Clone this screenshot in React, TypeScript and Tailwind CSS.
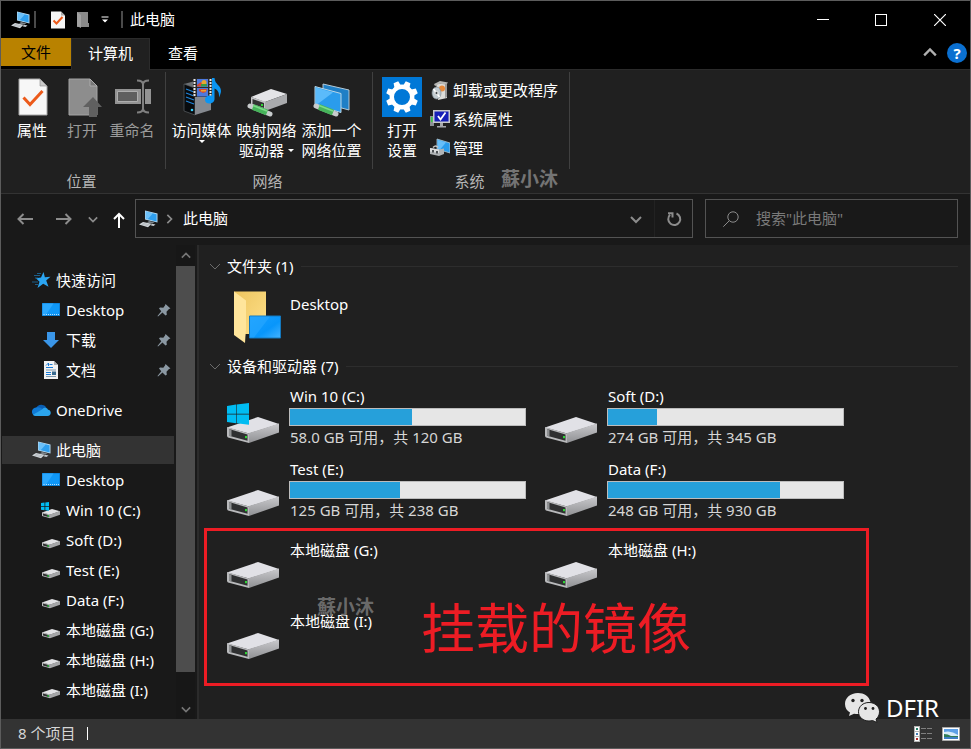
import { ReactNode } from 'react';
import clsx from 'clsx';

type IconProps = { className?: string };

type Drive = {
	name: string;
	detail: string;
	used: number;
	system?: boolean;
};

type TreeItem = {
	label: string;
	icon: ReactNode;
	pinned?: boolean;
};

function PcIcon({ className }: IconProps) {
	return (
		<svg viewBox="0 0 20 18" className={className} aria-hidden="true">
			<path d="M6 .5 18.500 3.500v9L6 9.600z" fill="#b9dcf2" />
			<path d="M6.800 1.500 17.600 4.200v7.200L6.800 8.800z" fill="#2f9fee" />
			<path d="M6.800 1.500 14 3.300 8.600 9.200l-1.800-.4z" fill="#6cc0f8" />
			<path d="m10 11 5.500 1.300-2.500 1.300-5-1.200z" fill="#7d858c" />
			<path d="m4 12 8.500 1.700-3.500 3.500-9-2.600z" fill="#d5dade" />
			<path d="m13 13.700 3.500.8-2 1.500-3-.8z" fill="#c3c9ce" />
			<path d="m3.500 13.200 7 1.600M2.400 14.200l7 1.600" stroke="#9aa1a7" strokeWidth=".5" />
		</svg>
	);
}

function DriveIcon({ className, system }: IconProps & { system?: boolean }) {
	return (
		<svg viewBox="0 0 52 40" className={className} aria-hidden="true">
			<defs>
				<linearGradient id="driveSide" x1="0" y1="0" x2="0" y2="1">
					<stop offset="0" stopColor="#c9c9cc" />
					<stop offset="1" stopColor="#8f9093" />
				</linearGradient>
			</defs>
			<path d="M0 24.500 31 14l21 7-30 9.500z" fill="#e1e1e6" />
			<path d="m22 30 30-9.500v9L22 40z" fill="url(#driveSide)" />
			<path d="m0 24 22 6.500V40L1 34.500q-1-.5-1-2z" fill="#b9babc" />
			<path d="m2 26 18.500 5.600v6.200L2 32.800z" fill="#2f3031" />
			<path d="m2 26 2.500.8v6.700L2 32.800z" fill="#8d8f91" />
			<rect x="18" y="33" width="2" height="2.200" fill="#2fd436" />
			{system && (
				<path
					d="M0 3 9 1.500v9.300H0zM9.600 1.400 22 0v10.800H9.600zM0 11.400h9v8.800L0 19zM9.600 11.400H22v10.400L9.600 20.300z"
					fill="#00bcf2"
				/>
			)}
		</svg>
	);
}

function SmallDriveIcon({ system }: { system?: boolean }) {
	return (
		<svg viewBox="0 0 20 18" className="h-[18px] w-5" aria-hidden="true">
			<path d="m1 11.500 10-3.500 8 2.300-10 3.500z" fill="#e2e2e5" />
			<path d="m9 13.500 10-3.400v3.700L9 17.200z" fill="#a5a6a8" />
			<path d="m1 11.300 8 2.300v3.600l-8-2.300z" fill="#bdbec0" />
			<path d="m2 12.500 6.300 1.800v1.900L2 14.500z" fill="#2f3031" />
			<rect x="6.500" y="14.200" width="1.500" height="1.500" fill="#24d03a" />
			{system && (
				<path
					d="M0 2 3.500 1.500V5H0zM4.300 1.500 8 1v4H4.300zM0 5.800h3.500v3.500L0 8.800zM4.300 5.800H8v4l-3.700-.5z"
					fill="#00bcf2"
				/>
			)}
		</svg>
	);
}

function DesktopIcon() {
	return (
		<svg viewBox="0 0 20 14" className="h-[14px] w-5" aria-hidden="true">
			<rect x="1" width="18" height="13" fill="#0b6cbd" />
			<rect x="1.500" y=".5" width="17" height="12" fill="#0f97f7" />
			<path d="M1.500.5h11l-8 12h-3z" fill="#2aa8ff" />
			<path d="M2.500 11.500h1M5 11.500h11M17 11.500h1" stroke="#fff" strokeDasharray="1 1" strokeOpacity=".7" />
		</svg>
	);
}

function DownloadIcon() {
	return (
		<svg viewBox="0 0 20 18" className="h-[18px] w-5" aria-hidden="true">
			<path d="M6 1h8v8h4l-8 8-8-8h4z" fill="#3a96e8" />
		</svg>
	);
}

function TextFileIcon() {
	return (
		<svg viewBox="0 0 20 18" className="h-[18px] w-5" aria-hidden="true">
			<path d="M3 0h10l4 4v14H3z" fill="#f2f2f2" />
			<path d="M13 0v4h4z" fill="#a9adb0" />
			<path d="M5 4.500 7.500 2v3M8.500 3.500h3M5 6.500h7" stroke="#1c7cd6" fill="none" />
			<path d="M5 9h10M5 15.500h10" stroke="#7f99ad" />
			<path d="M5 11.500h5M5 13.500h5" stroke="#1c7cd6" />
			<rect x="11" y="10.500" width="4" height="3.500" fill="#386a8f" />
		</svg>
	);
}

function QuickAccessIcon() {
	return (
		<svg viewBox="0 0 20 18" className="h-[18px] w-5" aria-hidden="true">
			<path
				d="m12.500 1 1.400 5.200 5.600-.4-4.300 3.700 2.300 6.300-5.300-3L6.500 17l2-6.200-3.500-3.600 5-.7z"
				fill="#2ba5f2"
			/>
			<path d="M6 2.500h4M3 4.500h6M4 7h3M1 11h6M4 13.500h3" stroke="#1c6ea5" strokeWidth=".8" />
		</svg>
	);
}

function CloudIcon() {
	return (
		<svg viewBox="0 0 20 14" className="h-[14px] w-5" aria-hidden="true">
			<path d="M5 5a6 6 0 0 1 10.500-.5l-6 4z" fill="#0a5fb4" />
			<path d="M4.500 13A4.300 4.300 0 1 1 6 4.500c2-.5 4 .5 6 2l-4 6.500z" fill="#0f7ad6" />
			<path d="M11 6.500c1-2.500 5.500-2.500 6 .2 3.500.3 4 6.300-.5 6.300h-12c-1 0-2-.5-2.500-1.200z" fill="#2ba4ec" />
		</svg>
	);
}

function PinIcon() {
	return (
		<svg viewBox="0 0 14 14" className="h-[14px] w-[14px]" aria-hidden="true">
			<path d="m8.500 1 5 4.500-1.500.5-2.500 2.700.3 3-1.300.8-3-3L1 13.500l-.5-.5L4.300 8.300 2 5.500l1-1 3.300.2L8 2.500z" fill="#8b98a3" />
		</svg>
	);
}

function Chevron({ dir, className }: { dir: 'up' | 'down' | 'right' } & IconProps) {
	const paths = {
		up: 'm1 8 5-5 5 5',
		down: 'm1 4 5 5 5-5',
		right: 'm4 1 5 5-5 5',
	};
	return (
		<svg viewBox="0 0 12 12" className={clsx('fill-none stroke-current', className)} aria-hidden="true">
			<path d={paths[dir]} />
		</svg>
	);
}

function PropertiesIcon() {
	return (
		<svg viewBox="0 0 40 40" className="h-10 w-10" aria-hidden="true">
			<path d="M7 2h21l7 7v29H7z" fill="#f7f7f7" stroke="#a6a6a6" />
			<path d="M28 2v7h7z" fill="#c9c9c9" stroke="#8c8c8c" strokeWidth=".6" />
			<path d="m11.500 20.500 6.500 7L30.500 14" fill="none" stroke="#ec5a1a" strokeWidth="3" />
		</svg>
	);
}

function OpenIcon() {
	return (
		<svg viewBox="0 0 40 40" className="h-10 w-10" aria-hidden="true">
			<path d="M7 2h21l7 7v29H7z" fill="#8d8d8d" stroke="#a3a3a3" />
			<path d="M28 2v7h7z" fill="#777" stroke="#b4b4b4" strokeWidth=".8" />
			<path d="m31 20 9 10h-5v10h-8V30h-6z" fill="#606060" />
		</svg>
	);
}

function RenameIcon() {
	return (
		<svg viewBox="0 0 40 40" className="h-10 w-10" aria-hidden="true">
			<path d="M3 12h36v15H3z" fill="#939393" />
			<path d="M5.500 14.500h20v10h-20z" fill="#5f5f5f" stroke="#aeaeae" />
			<path d="M29 11h4v17h-4z" fill="#202020" />
			<path d="M25 3.500q6 0 6 4v24q0 4-6 4M37 3.500q-6 0-6 4v24q0 4 6 4" fill="none" stroke="#808080" strokeWidth="2" />
		</svg>
	);
}

function MediaIcon() {
	return (
		<svg viewBox="0 0 40 40" className="h-10 w-10" aria-hidden="true">
			<path d="m2 7 11-3 16 3-16 5z" fill="#6b6f73" />
			<path d="m2 7 11 4v27L2 34z" fill="#080b0e" stroke="#5a5f63" strokeWidth=".7" />
			<path d="m13 11 16-4v26l-16 5z" fill="#85898f" />
			<path d="m4 12 8 3M4 16l8 3M4 20l8 3M4 24l8 3" stroke="#1f86dd" strokeWidth="1.200" />
			<circle cx="10" cy="33" r="1.300" fill="#38d0ff" />
			<path d="M11 1.500h19V20H11z" fill="#2b2b2b" />
			<path d="M12.500 2v18M28.500 2v18" stroke="#e9e9e9" strokeWidth="2" strokeDasharray="2 1" />
			<path d="M15 2h11v8H15zM15 11h11v8.500H15z" fill="#4d79dd" />
			<path d="m15 8 4-3 3 3-3 1.500h-4zM17 12h8l-1 3-3 1-4-2z" fill="#d8472d" />
			<circle cx="22" cy="5.500" r="2.500" fill="#e8a531" />
			<path d="M19 7h6v2.500h-6z" fill="#3a9a43" />
			<path d="M19 13h5v1.500h-5z" fill="#e8a531" />
			<path
				d="M30 1h2.500c.5 7 6.500 7 6.500 13 0 2-1 4-2 6.500.5-6-2-8-4.500-9V22c0 3-2.800 4.500-5 4.500-3 0-4.500-1.500-4.500-3.700 0-3.300 4-5.300 7-3.800z"
				fill="#0b95f2"
			/>
		</svg>
	);
}

function Cable() {
	return (
		<g>
			<path d="m4 29 20 8" stroke="#c8cccd" strokeWidth="5" strokeLinecap="round" />
			<path d="m7 30 14 5.500" stroke="#46b35a" strokeWidth="6" />
			<path d="m7 28.500 14 5.500" stroke="#7cdb88" strokeWidth="1.500" />
		</g>
	);
}

function MapDriveIcon() {
	return (
		<svg viewBox="0 0 40 40" className="h-10 w-10" aria-hidden="true">
			<path d="m4 20 20-8 16 5-22 8z" fill="#e4e4e7" />
			<path d="m18 25 22-8v9l-22 8z" fill="#a9aaad" />
			<path d="m4 20 14 4.500V34L4 28z" fill="#c4c5c7" />
			<path d="m5.500 22 11.500 4v5L5.500 27z" fill="#333" />
			<rect x="14" y="27" width="2" height="2" fill="#2fd436" />
			<g transform="translate(-1 0)">
				<Cable />
			</g>
		</svg>
	);
}

function NetworkPlaceIcon() {
	return (
		<svg viewBox="0 0 40 40" className="h-10 w-10" aria-hidden="true">
			<path d="m11 7 26 6v20l-26-7z" fill="#1f7fc6" stroke="#b4c9d6" />
			<path d="m3 9.500 26 7v19L3 28z" fill="#2a9cec" stroke="#b9d6e6" />
			<path d="m4 10.500 17 5L5 27.500l-1-.3z" fill="#5bbbfa" />
			<Cable />
		</svg>
	);
}

function SettingsTile() {
	return (
		<svg viewBox="0 0 40 40" className="h-10 w-10" aria-hidden="true">
			<rect width="40" height="40" fill="#0078d7" />
			<circle cx="20" cy="20" r="10.200" fill="none" stroke="#fff" strokeWidth="4.400" />
			{[22.5, 67.5, 112.5, 157.5, 202.5, 247.5, 292.5, 337.5].map((angle) => (
				<path key={angle} d="m16.500 9.500 1-5.500h5l1 5.500z" fill="#fff" transform={`rotate(${angle} 20 20)`} />
			))}
		</svg>
	);
}

function UninstallIcon() {
	return (
		<svg viewBox="0 0 20 20" className="h-5 w-5" aria-hidden="true">
			<path d="m6 3 11 1v14l-9 2z" fill="#dcdcd9" />
			<path d="m4 4 6-3 8 1.500-2 2.500-6-1.500L5 6z" fill="#b7b7b4" />
			<path d="m15 4 2-.5V17l-2 1z" fill="#999" />
			<circle cx="12" cy="8.500" r="3" fill="#e68a3c" />
			<ellipse cx="6.500" cy="13" rx="4.500" ry="6" fill="#c2ccd2" stroke="#7f8a90" strokeWidth=".7" />
			<path d="m6.500 13-3-4M6.500 13l3 4" stroke="#fff" strokeWidth="1.500" />
			<circle cx="6.500" cy="13" r="1.600" fill="#43494d" stroke="#eee" />
		</svg>
	);
}

function SystemIcon() {
	return (
		<svg viewBox="0 0 20 20" className="h-5 w-5" aria-hidden="true">
			<path d="M0 7h4v10H0z" fill="#8c9095" />
			<path d="M1 8h1.500v5H1z" fill="#36d143" />
			<path d="M3 1h17v13H3z" fill="#c7c9cc" />
			<path d="M4.500 2.500h14v10h-14z" fill="#1620b8" />
			<path d="m8 7 2.500 3.500L15.500 3.500" fill="none" stroke="#fff" strokeWidth="1.800" />
			<path d="M10 14h3v3h3v1.500H7V17h3z" fill="#a6a8ab" />
		</svg>
	);
}

function ManageIcon() {
	return (
		<svg viewBox="0 0 20 20" className="h-5 w-5" aria-hidden="true">
			<path d="m7 1 13 4v10L7 11z" fill="#2a9cec" stroke="#b3cad8" strokeWidth=".8" />
			<path d="m8 2 8 2.500-6 7-2-.6z" fill="#67bffa" />
			<path d="M3 9.500q3-3 5 0" fill="none" stroke="#c5c5c5" strokeWidth="1.500" />
			<path d="m0 10 9 1.500 5-1V16l-5 2-9-2z" fill="#b0b3b5" />
			<path d="m0 10 9 1.500V15l-9-1.500z" fill="#dadcdd" />
			<path d="M2 12h2v2.500H2zM6 13h2v2.500H6z" fill="#4d5154" />
		</svg>
	);
}

function FolderIcon() {
	return (
		<svg viewBox="0 0 54 54" className="h-[54px] w-[54px]" aria-hidden="true">
			<defs>
				<linearGradient id="folderBack" x1="0" y1="0" x2="1" y2="1">
					<stop offset="0" stopColor="#edc55f" />
					<stop offset="1" stopColor="#ffe08a" />
				</linearGradient>
				<linearGradient id="screen" x1="0" y1="0" x2="1" y2="1">
					<stop offset="0" stopColor="#1aa0ff" />
					<stop offset=".6" stopColor="#0896fb" />
					<stop offset="1" stopColor="#43b2ff" />
				</linearGradient>
			</defs>
			<path d="M7 1.500h32V44H7z" fill="url(#folderBack)" />
			<path d="m7 1.500 12 9V38l-1 15L7 45z" fill="#ffe59b" />
			<path d="M22.500 26h31v22h-31z" fill="url(#screen)" stroke="#1478bd" />
			<path d="M23 26.500h20L27 47.500h-4z" fill="#2aa9ff" fillOpacity=".6" />
		</svg>
	);
}

function WeChatIcon() {
	return (
		<svg viewBox="0 0 36 30" className="h-[30px] w-9" aria-hidden="true">
			<path d="M13 0C5 0 0 5 0 11c0 4 2 7 5 8.500L4 23l5-2.300c2 .5 5 .5 6 .3C14 14 19 9 25.500 9 24 3 19 0 13 0z" fill="#e6e6e6" />
			<path d="M24 9.500c-6 0-10.500 4-10.500 9.300S18 28 24 28c1.500 0 2.500-.2 3.500-.5L32 29.500l-1-3.500c2-1.500 3.500-4 3.500-7.200 0-5.300-4.500-9.300-10.500-9.300z" fill="#e6e6e6" stroke="#202020" />
			<g fill="#202020">
				<circle cx="8" cy="7.500" r="1.700" />
				<circle cx="17" cy="7.500" r="1.700" />
				<circle cx="20.500" cy="15.500" r="1.400" />
				<circle cx="28" cy="15.500" r="1.400" />
			</g>
		</svg>
	);
}

const drives: Drive[] = [
	{ name: 'Win 10 (C:)', detail: '58.0 GB 可用，共 120 GB', used: 52, system: true },
	{ name: 'Soft (D:)', detail: '274 GB 可用，共 345 GB', used: 21 },
	{ name: 'Test (E:)', detail: '125 GB 可用，共 238 GB', used: 47 },
	{ name: 'Data (F:)', detail: '248 GB 可用，共 930 GB', used: 73 },
];

const localDisks = ['本地磁盘 (G:)', '本地磁盘 (H:)', '本地磁盘 (I:)'];

const quickAccess: TreeItem[] = [
	{ label: 'Desktop', icon: <DesktopIcon />, pinned: true },
	{ label: '下载', icon: <DownloadIcon />, pinned: true },
	{ label: '文档', icon: <TextFileIcon />, pinned: true },
];

const thisPc: TreeItem[] = [
	{ label: 'Desktop', icon: <DesktopIcon /> },
	{ label: 'Win 10 (C:)', icon: <SmallDriveIcon system /> },
	{ label: 'Soft (D:)', icon: <SmallDriveIcon /> },
	{ label: 'Test (E:)', icon: <SmallDriveIcon /> },
	{ label: 'Data (F:)', icon: <SmallDriveIcon /> },
	...localDisks.map((label) => ({ label, icon: <SmallDriveIcon /> })),
];

function TitleBar() {
	return (
		<header className="flex h-[37px] items-center bg-black pl-[10px]">
			<PcIcon className="h-[18px] w-5" />
			<span className="ml-[3px] h-[17px] w-[2px] border border-[#4a4a4a]" />
			<button aria-label="属性" className="ml-[14px]">
				<svg viewBox="0 0 16 18" className="h-[18px] w-4" aria-hidden="true">
					<path d="M1 .5h10l4 4v13H1z" fill="#f5f5f5" />
					<path d="M11 .5v4h4z" fill="#aaa" />
					<path d="m3.500 9.500 3 3 6-6.500" fill="none" stroke="#ec5a1a" strokeWidth="2" />
				</svg>
			</button>
			<button aria-label="新建文件夹" className="ml-[10px]">
				<svg viewBox="0 0 14 18" className="h-[18px] w-[14px]" aria-hidden="true">
					<path d="M1 1h11v11h1v4H1z" fill="#8a8a8a" />
					<path d="m1 1 4 3v13l-4-2z" fill="#a2a2a2" />
				</svg>
			</button>
			<button aria-label="自定义快速访问工具栏" className="ml-[11px]">
				<svg viewBox="0 0 8 8" className="h-2 w-2" aria-hidden="true">
					<path d="M.5.500h7v1h-7zM1 3.500h6l-3 3z" fill="#fff" />
				</svg>
			</button>
			<span className="ml-[12px] h-[17px] w-[2px] border border-[#4a4a4a]" />
			<h1 className="ml-[7px] grow text-[15px]">此电脑</h1>
			<button aria-label="最小化" className="flex h-full w-[58px] items-center justify-center">
				<span className="h-px w-3 bg-white" />
			</button>
			<button aria-label="最大化" className="flex h-full w-[58px] items-center justify-center">
				<span className="h-3 w-3 border border-white" />
			</button>
			<button aria-label="关闭" className="flex h-full w-[60px] items-center justify-center">
				<svg viewBox="0 0 12 12" className="h-3 w-3 stroke-white" aria-hidden="true">
					<path d="m0 0 12 12M12 0 0 12" strokeWidth="1.200" />
				</svg>
			</button>
		</header>
	);
}

function TabBar() {
	return (
		<nav className="flex h-8 items-start border-b border-[#2b2b2b] bg-black">
			<button className="h-7 w-[70px] bg-[#b98200] text-black">文件</button>
			<button className="h-8 w-[79px] border-x border-t border-[#2b2b2b] bg-[#202020] pb-[2px]">计算机</button>
			<button className="h-8 w-[66px] pb-[2px]">查看</button>
			<div className="ml-auto flex h-8 items-center gap-[10px] pr-[3px] pb-[2px]">
				<button aria-label="折叠功能区">
					<Chevron dir="up" className="h-[14px] w-[14px] stroke-2 text-[#b0b0b0]" />
				</button>
				<button aria-label="帮助" className="h-5 w-5 rounded-full bg-[#0a6fd0] leading-5 font-bold">
					?
				</button>
			</div>
		</nav>
	);
}

type RibbonButtonProps = {
	icon: ReactNode;
	lines: string[];
	className: string;
	disabled?: boolean;
	arrow?: boolean;
};

function Caret() {
	return <span className="inline-block border-x-[3px] border-t-[3px] border-x-transparent border-t-white" />;
}

function RibbonButton({ icon, lines, className, disabled, arrow }: RibbonButtonProps) {
	return (
		<button disabled={disabled} className={clsx('flex flex-col items-center disabled:text-[#9b9b9b]', className)}>
			{icon}
			<span className="mt-[3px] flex flex-col items-center leading-5 whitespace-nowrap">
				{lines.map((line, i) => (
					<span key={line} className="flex items-center gap-1">
						{line}
						{arrow && i === 1 && <Caret />}
					</span>
				))}
			</span>
			{arrow && lines.length === 1 && (
				<span className="flex h-1">
					<Caret />
				</span>
			)}
		</button>
	);
}

function RibbonGroup({ title, className, children }: { title: string; className: string; children: ReactNode }) {
	return (
		<section className={clsx('relative flex shrink-0 flex-col', className)}>
			<div className="flex h-[98px] border-r border-[#404040] pt-[5px]">{children}</div>
			<h2 className="pr-1 text-center leading-6 text-[#b5b5b5]">{title}</h2>
		</section>
	);
}

function Ribbon() {
	return (
		<div className="flex h-[124px] border-b border-[#333] bg-[#202020] pt-[2px]">
			<RibbonGroup title="位置" className="w-[165px]">
				<RibbonButton icon={<PropertiesIcon />} lines={['属性']} className="ml-[6px] w-[50px]" />
				<RibbonButton icon={<OpenIcon />} lines={['打开']} className="w-[50px]" disabled />
				<RibbonButton icon={<RenameIcon />} lines={['重命名']} className="w-[50px]" disabled />
			</RibbonGroup>
			<RibbonGroup title="网络" className="w-[207px]">
				<RibbonButton icon={<MediaIcon />} lines={['访问媒体']} className="ml-[3px] w-[65px]" arrow />
				<RibbonButton icon={<MapDriveIcon />} lines={['映射网络', '驱动器']} className="w-[65px]" arrow />
				<RibbonButton icon={<NetworkPlaceIcon />} lines={['添加一个', '网络位置']} className="w-[65px]" />
			</RibbonGroup>
			<RibbonGroup title="系统" className="w-[197px]">
				<RibbonButton icon={<SettingsTile />} lines={['打开', '设置']} className="ml-1 w-[50px]" />
				<div className="ml-[3px] flex flex-col gap-[9px] pt-[3px] leading-5">
					<button className="flex gap-[3px] whitespace-nowrap">
						<UninstallIcon />
						卸载或更改程序
					</button>
					<button className="flex gap-[3px]">
						<SystemIcon />
						系统属性
					</button>
					<button className="flex gap-[3px]">
						<ManageIcon />
						管理
					</button>
				</div>
				<span className="absolute right-3 bottom-[2px] text-[19px] leading-6 font-bold text-[#747474]">蘇小沐</span>
			</RibbonGroup>
		</div>
	);
}

function AddressBar() {
	return (
		<div className="flex h-[51px] items-start bg-[#191919] pt-[5px] pr-3">
			<div className="flex h-10 w-[134px] shrink-0 items-center text-[#8c8c8c]">
				<button aria-label="后退" className="ml-4">
					<svg viewBox="0 0 16 12" className="h-3 w-4 fill-none stroke-current stroke-2" aria-hidden="true">
						<path d="M16 6H1.500M6.500 1l-5 5 5 5" />
					</svg>
				</button>
				<button aria-label="前进" className="ml-[23px]">
					<svg viewBox="0 0 16 12" className="h-3 w-4 fill-none stroke-current stroke-2" aria-hidden="true">
						<path d="M0 6h14.500M9.500 1l5 5-5 5" />
					</svg>
				</button>
				<button aria-label="最近浏览的位置" className="ml-[16px]">
					<Chevron dir="down" className="h-[10px] w-[10px] stroke-2" />
				</button>
				<button aria-label="上移" className="ml-[14px] pt-[2px]">
					<svg viewBox="0 0 14 16" className="h-4 w-[14px] fill-none stroke-white stroke-2" aria-hidden="true">
						<path d="M7 16V2M2 7l5-5 5 5" />
					</svg>
				</button>
			</div>
			<div className="flex h-[39px] grow items-center border border-[#535353] pl-[3px]">
				<PcIcon className="h-[18px] w-5" />
				<Chevron dir="right" className="ml-[5px] h-[10px] w-[10px] stroke-2 text-[#8c8c8c]" />
				<a href="#this-pc" className="ml-[9px] grow">
					此电脑
				</a>
				<button aria-label="以前的位置">
					<Chevron dir="down" className="h-3 w-3 stroke-2 text-[#8c8c8c]" />
				</button>
				<button aria-label="刷新" className="ml-3 flex h-full w-[38px] items-center justify-center border-l border-[#222]">
					<svg viewBox="0 0 16 16" className="h-4 w-4 fill-none stroke-[#8c8c8c] stroke-2" aria-hidden="true">
						<path d="M10.500 2.500a6 6 0 1 1-6.500 1.300M2 2.200h4.500v4.300" />
					</svg>
				</button>
			</div>
			<label className="ml-3 flex h-[39px] w-[253px] items-center border border-[#535353] pl-[17px]">
				<svg viewBox="0 0 16 16" className="h-4 w-4 shrink-0 fill-none stroke-[#8c8c8c]" aria-hidden="true">
					<circle cx="10" cy="6" r="5.200" />
					<path d="m6.300 9.700-6 6" />
				</svg>
				<input
					type="text"
					aria-label="搜索"
					placeholder={'搜索"此电脑"'}
					className="ml-[17px] w-full min-w-0 bg-transparent outline-none placeholder:text-[#7a7a7a]"
				/>
			</label>
		</div>
	);
}

function TreeChildren({ items }: { items: TreeItem[] }) {
	return (
		<ul>
			{items.map((item) => (
				<li key={item.label} className="flex h-[30px] items-center pr-[3px] pl-10">
					{item.icon}
					<a href="#item" className="ml-[5px] grow whitespace-nowrap">
						{item.label}
					</a>
					{item.pinned && <PinIcon />}
				</li>
			))}
		</ul>
	);
}

function Sidebar() {
	return (
		<aside className="flex w-[198px] shrink-0 border-r-2 border-[#2b2b2b] bg-[#191919]">
			<div className="w-[173px] pt-5 pb-3">
				<a href="#quick" className="flex h-[30px] items-center gap-[5px] pl-[30px]">
					<QuickAccessIcon />
					快速访问
				</a>
				<TreeChildren items={quickAccess} />
				<a href="#onedrive" className="mt-[10px] mb-[11px] flex h-[30px] items-center gap-[5px] pl-[30px]">
					<CloudIcon />
					OneDrive
				</a>
				<a href="#this-pc" className="my-px ml-px flex h-7 items-center gap-1 bg-[#333] pl-[30px]">
					<PcIcon className="h-[18px] w-5" />
					此电脑
				</a>
				<TreeChildren items={thisPc} />
			</div>
			<div className="ml-[2px] flex w-[19px] flex-col items-center bg-[#171717] text-[#757575]">
				<button aria-label="向上滚动" className="flex h-[21px] items-center">
					<Chevron dir="up" className="h-[10px] w-[10px] stroke-2" />
				</button>
				<span className="w-full grow bg-[#4d4d4d]" />
				<button aria-label="向下滚动" className="mt-[26px] flex h-[21px] items-center">
					<Chevron dir="down" className="h-[10px] w-[10px] stroke-2" />
				</button>
			</div>
		</aside>
	);
}

function GroupHeading({ children }: { children: ReactNode }) {
	return (
		<h2 className="flex h-5 items-center pl-[10px] leading-5">
			<Chevron dir="down" className="h-3 w-3 text-[#6b6b6b]" />
			<span className="ml-[6px]">{children}</span>
			<span className="ml-2 h-px grow bg-[#2d2d2d]" />
		</h2>
	);
}

function DriveTile({ drive }: { drive: Drive }) {
	return (
		<li className="flex h-[73px]">
			<DriveIcon system={drive.system} className="mt-[17px] h-10 w-[52px]" />
			<div className="ml-[10px] w-[237px]">
				<p className="pl-px leading-5">{drive.name}</p>
				<div className="mt-[2px] h-[18px] border border-[#bcbcbc] bg-[#e6e6e6]">
					<div className="h-full bg-[#26a0da]" style={{ width: `${drive.used}%` }} />
				</div>
				<p className="mt-px pl-px leading-5 text-[#d6d6d6]">{drive.detail}</p>
			</div>
		</li>
	);
}

function Content() {
	return (
		<main className="relative min-w-0 grow bg-[#202020] pt-[11px] pr-3">
			<GroupHeading>文件夹 (1)</GroupHeading>
			<div className="mt-[14px] ml-7 flex">
				<FolderIcon />
				<a href="#desktop" className="ml-[9px] pt-1 leading-5">
					Desktop
				</a>
			</div>
			<div className="mt-3">
				<GroupHeading>设备和驱动器 (7)</GroupHeading>
			</div>
			<ul className="mt-[10px] ml-7 grid grid-cols-[repeat(auto-fill,318px)]">
				{drives.map((drive) => (
					<DriveTile key={drive.name} drive={drive} />
				))}
			</ul>
			<div className="relative pt-2 pb-8">
				<ul className="ml-7 grid grid-cols-[repeat(auto-fill,318px)]">
					{localDisks.map((name) => (
						<li key={name} className="flex h-[71px]">
							<DriveIcon className="mt-2 h-10 w-[52px]" />
							<p className="ml-[11px] leading-5">{name}</p>
						</li>
					))}
				</ul>
				<div className="absolute top-[-4px] left-[5px] h-[158px] w-[665px] border-[3px] border-[#ed1c24]" />
				<p className="absolute top-[66px] left-[222px] text-[54px] leading-[60px] text-[#ed1c24]">挂载的镜像</p>
				<span className="absolute top-[63px] left-[118px] text-[19px] leading-6 font-bold text-[#747474]/90">蘇小沐</span>
			</div>
			<div className="absolute right-[31px] bottom-[-4px] z-10 flex items-center gap-[5px] text-2xl leading-[30px]">
				<WeChatIcon />
				DFIR
			</div>
		</main>
	);
}

function StatusBar() {
	return (
		<footer className="flex h-[29px] items-center bg-[#333] pr-[10px] pl-[17px]">
			<span className="text-[#d6d6d6]">8 个项目</span>
			<span className="ml-3 h-[13px] w-px bg-white" />
			<button aria-label="详细信息" className="ml-auto">
				<svg viewBox="0 0 18 16" className="h-4 w-[18px]" aria-hidden="true">
					<path d="M0 0h6v16H0z" fill="#b5b5b5" />
					<path d="M1 1h4v4H1zM1 6h4v4H1zM1 11h4v4H1z" fill="#fff" />
					<path d="M2 2h2v2H2z" fill="#27826a" />
					<path d="M2 7h2v2H2z" fill="#417bb5" />
					<path d="M2 12h2v2H2z" fill="#b52525" />
					<path d="M7 2.500h5M13 2.500h5M7 7.500h5M13 7.500h5M7 12.500h5M13 12.500h5" stroke="#808080" />
				</svg>
			</button>
			<button aria-label="大图标" className="ml-[10px]">
				<svg viewBox="0 0 18 14" className="h-[14px] w-[18px]" aria-hidden="true">
					<path d="M.5.500h17v13H.5z" fill="#fff" stroke="#aaa" />
					<path d="M2 2h14v10H2z" fill="#5c9fe6" />
					<path d="M2 5q7-2 14 3v1H2z" fill="#d7ecf8" />
					<path d="M2 7q4 0 7 2h7v1H2z" fill="#2f7c56" />
					<path d="M2 10h14v2H2z" fill="#3f7fc4" />
				</svg>
			</button>
		</footer>
	);
}

export default function App() {
	return (
		<div className="flex min-h-screen flex-col border border-[#5c5c5c] bg-[#191919] font-['Noto_Sans','Noto_Sans_CJK_SC',sans-serif] text-[15px] text-white">
			<TitleBar />
			<TabBar />
			<Ribbon />
			<AddressBar />
			<div className="flex grow">
				<Sidebar />
				<Content />
			</div>
			<StatusBar />
		</div>
	);
}
